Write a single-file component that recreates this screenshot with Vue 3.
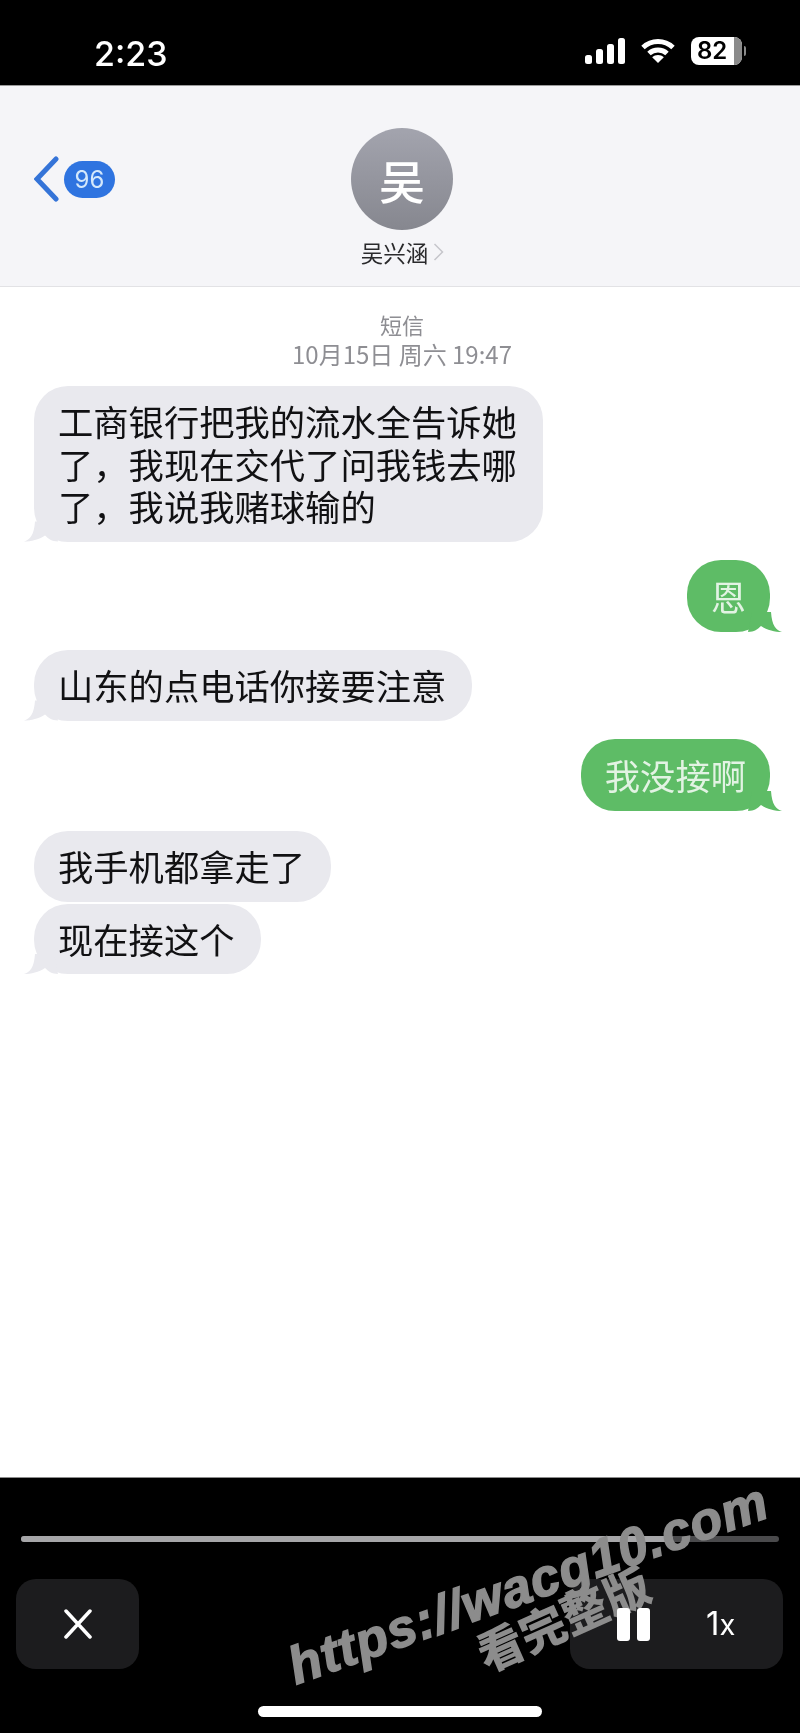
<template>
  <div class="phone">
    <div class="status">
      <span class="time">2:23</span>
      <div class="status-icons">
        <svg class="signal" width="40" height="26" viewBox="0 0 40 26">
          <rect x="0" y="17" width="7" height="9" rx="2.5" />
          <rect x="11" y="11" width="7" height="15" rx="2.5" />
          <rect x="22" y="6" width="7" height="20" rx="2.5" />
          <rect x="33" y="0" width="7" height="26" rx="2.5" />
        </svg>
        <svg class="wifi" width="34" height="24" viewBox="0 0 34 24">
          <path d="M2 8.500C10.500 .5 23.500 .5 32 8.500" />
          <path d="M8 14.500C13 9.800 21 9.800 26 14.500" />
          <path class="wifi-dot" d="M17 24l-5.800-5.800c3.200-2.800 8.400-2.800 11.600 0z" />
        </svg>
        <div class="battery">
          <span class="battery-level">82</span>
          <i class="battery-rest"></i>
          <i class="battery-nub"></i>
        </div>
      </div>
    </div>

    <header class="nav">
      <div class="back">
        <svg width="25" height="46" viewBox="0 0 25 46">
          <path d="M22 3L3 23l19 20" />
        </svg>
        <span class="badge">96</span>
      </div>
      <div class="contact">
        <div class="avatar">吴</div>
        <div class="name">
          吴兴涵
          <svg width="11" height="20" viewBox="0 0 11 20"><path d="M1.500 2l8 8-8 8" /></svg>
        </div>
      </div>
    </header>

    <main class="thread">
      <div class="stamp">
        <div class="stamp-type">短信</div>
        <div class="stamp-date">10月15日 周六 19:47</div>
      </div>
      <div
        v-for="msg in messages"
        :key="msg.text"
        class="bubble"
        :class="[msg.me ? 'me' : 'them', { tail: msg.tail }]"
        :style="{ marginTop: msg.gap + 'px' }"
      >
        <span v-for="line in msg.text.split('|')" :key="line" class="line">{{ line }}</span>
      </div>
    </main>

    <footer class="player">
      <div class="progress"><div class="progress-fill" :style="{ width: progress + '%' }"></div></div>
      <div class="controls">
        <button class="btn close">
          <svg width="30" height="30" viewBox="0 0 30 30"><path d="M3 2l24 26M27 2L3 28" /></svg>
        </button>
        <div class="btn right">
          <div class="pause"><i></i><i></i></div>
          <span class="speed">1<small>x</small></span>
        </div>
      </div>
      <div class="home"></div>
      <div class="mark mark-url">https://wacg10.com</div>
      <div class="mark mark-cn">看完整版</div>
    </footer>
  </div>
</template>

<script setup>
const progress = 86

const messages = [
  { text: "工商银行把我的流水全告诉她|了，我现在交代了问我钱去哪|了，我说我赌球输的", gap: 17, tail: true },
  { text: "恩", me: true, gap: 18, tail: true },
  { text: "山东的点电话你接要注意", gap: 18, tail: true },
  { text: "我没接啊", me: true, gap: 18, tail: true },
  { text: "我手机都拿走了", gap: 20 },
  { text: "现在接这个", gap: 2, tail: true },
]
</script>

<style>
html,
body {
  margin: 0;
  background: #000;
}
</style>

<style scoped>
.phone {
  width: 800px;
  height: 1733px;
  display: flex;
  flex-direction: column;
  overflow: hidden;
  font-family: "Noto Sans CJK SC", "Liberation Sans", sans-serif;
  background: #fff;
  filter: blur(0.5px);
}

.status {
  height: 85px;
  flex: none;
  box-sizing: border-box;
  padding: 37px 58px 0 94px;
  display: flex;
  justify-content: space-between;
  align-items: flex-start;
  background: #000;
  color: #fff;
}

.time {
  font-family: Inter, sans-serif;
  font-size: 34px;
  font-weight: 500;
  line-height: 34px;
}

.status-icons {
  display: flex;
  align-items: center;
  gap: 16px;
}

.signal {
  fill: #fff;
}

.wifi {
  fill: none;
  stroke: #fff;
  stroke-width: 5;
}

.wifi-dot {
  fill: #fff;
  stroke: none;
}

.battery {
  position: relative;
  width: 51px;
  height: 28px;
  border-radius: 8px;
  background: #fff;
  overflow: visible;
}

.battery-level {
  position: absolute;
  left: 6px;
  top: 0;
  font-family: Inter, sans-serif;
  font-size: 24px;
  font-weight: 600;
  line-height: 28px;
  color: #000;
}

.battery-rest {
  position: absolute;
  right: 0;
  top: 0;
  width: 8px;
  height: 28px;
  border-radius: 0 8px 8px 0;
  background: #8a8a8a;
}

.battery-nub {
  position: absolute;
  right: -4px;
  top: 9px;
  width: 2px;
  height: 10px;
  border-radius: 0 2px 2px 0;
  background: #8a8a8a;
}

.nav {
  height: 202px;
  flex: none;
  box-sizing: border-box;
  position: relative;
  background: #f5f5f8;
  border-top: 1px solid #9a9a9a;
  border-bottom: 1px solid #e2e2e5;
  display: flex;
  justify-content: center;
}

.back {
  position: absolute;
  left: 34px;
  top: 70px;
  display: flex;
  align-items: center;
  gap: 5px;
}

.back svg {
  fill: none;
  stroke: #3574d8;
  stroke-width: 5;
  stroke-linecap: round;
}

.badge {
  width: 51px;
  height: 37px;
  border-radius: 19px;
  background: #2f74e0;
  color: #d4e8fb;
  font-family: Inter, sans-serif;
  font-size: 24px;
  line-height: 37px;
  text-align: center;
}

.contact {
  display: flex;
  flex-direction: column;
  align-items: center;
  margin-left: 4px;
  padding-top: 42px;
}

.avatar {
  width: 102px;
  height: 102px;
  border-radius: 50%;
  background: linear-gradient(#a3a4ae, #86878f);
  color: #fff;
  font-size: 46px;
  font-weight: 500;
  line-height: 102px;
  text-align: center;
}

.name {
  display: flex;
  align-items: center;
  gap: 5px;
  margin-top: 6px;
  margin-left: 1px;
  font-size: 22.500px;
  line-height: 32px;
  color: #2a2a2c;
}

.name svg {
  fill: none;
  stroke: #c6c6cb;
  stroke-width: 1.500;
}

.thread {
  flex: 1;
  display: flex;
  flex-direction: column;
  align-items: flex-start;
  padding: 0 30px 0 34px;
}

.stamp {
  align-self: center;
  margin-top: 24px;
  text-align: center;
  color: #8e8e93;
  font-size: 22px;
  line-height: 26px;
}

.stamp-date {
  margin-top: 2px;
  font-size: 24px;
  line-height: 30px;
}

.bubble {
  position: relative;
  box-sizing: border-box;
  padding: 14px 26px 14px 24px;
  border-radius: 34px;
  font-size: 35.300px;
  line-height: 42.500px;
  white-space: nowrap;
}

.line {
  display: block;
}

.them {
  background: #e9e9ee;
  color: #111113;
}

.me {
  align-self: flex-end;
  background: #5ebc66;
  color: #e2f3e3;
  padding: 15px 24px;
}

.tail::before {
  content: "";
  position: absolute;
  bottom: 0;
  width: 34px;
  height: 30px;
  background: inherit;
  clip-path: path("M0 30C6 28 10 24 11 10L30 10L34 30C28 30 24 27 21 24C15 28 7 30 0 30Z");
}

.them.tail::before {
  left: -10px;
}

.me.tail::before {
  right: -12px;
  transform: scaleX(-1);
}

.player {
  position: relative;
  height: 256px;
  flex: none;
  box-sizing: border-box;
  padding: 58px 17px 0 16px;
  background: #000;
  border-top: 1px solid #8c8c8c;
}

.progress {
  height: 6px;
  margin: 0 4px 0 5px;
  border-radius: 3px;
  background: #4a4a4c;
}

.progress-fill {
  height: 100%;
  border-radius: 3px;
  background: #a6a6a8;
}

.controls {
  display: flex;
  justify-content: space-between;
  margin-top: 37px;
}

.btn {
  height: 90px;
  border: 0;
  padding: 0;
  border-radius: 20px;
  background: #1c1c1e;
  display: flex;
  align-items: center;
  color: #fff;
}

.close {
  width: 123px;
  justify-content: center;
}

.close svg {
  fill: none;
  stroke: #fff;
  stroke-width: 3.500;
  stroke-linecap: round;
}

.right {
  width: 213px;
  box-sizing: border-box;
  padding-left: 47px;
}

.pause {
  position: relative;
  z-index: 1;
  display: flex;
  gap: 7px;
}

.pause i {
  width: 13px;
  height: 33px;
  border-radius: 3px;
  background: #fff;
}

.speed {
  margin-left: 56px;
  font-family: Inter, sans-serif;
  font-size: 33px;
  line-height: 36px;
}

.speed small {
  font-size: 29px;
}

.home {
  width: 284px;
  height: 11px;
  margin: 37px auto 0;
  border-radius: 6px;
  background: #fff;
}

.mark {
  position: absolute;
  white-space: nowrap;
  color: #8c8c8c;
  font-weight: 700;
  transform-origin: 0 100%;
}

.mark-url {
  left: 300px;
  top: 158px;
  font-family: "Liberation Sans", sans-serif;
  font-style: italic;
  font-size: 52.500px;
  line-height: 60px;
  letter-spacing: 1px;
  -webkit-text-stroke: 1.500px #8c8c8c;
  transform: rotate(-19.500deg);
}

.mark-cn {
  left: 490px;
  top: 146px;
  font-size: 46px;
  font-weight: 900;
  line-height: 56px;
  transform: rotate(-24deg);
}
</style>
